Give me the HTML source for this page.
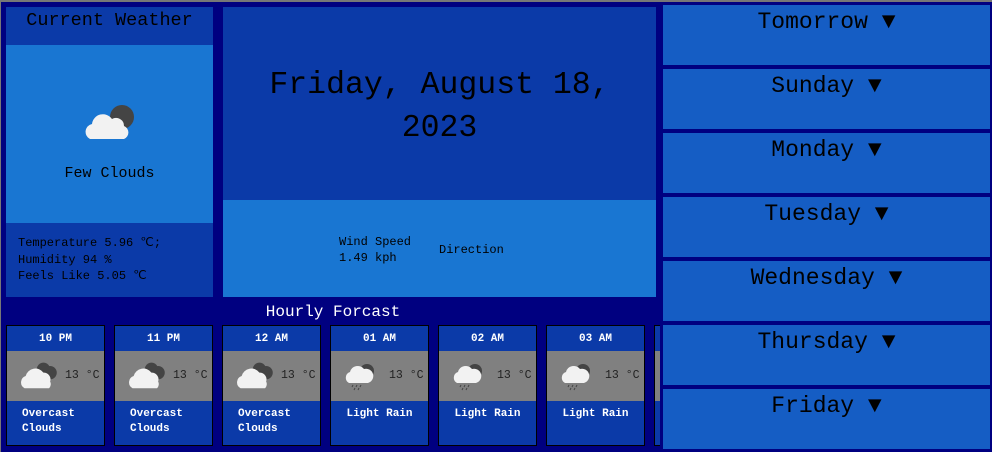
<!DOCTYPE html>
<html><head><style>
*{margin:0;padding:0;box-sizing:border-box}
body{width:992px;height:452px;background:#000080;position:relative;overflow:hidden;font-family:"Liberation Mono",monospace}
.a{position:absolute}
.day{position:absolute;left:663px;width:327px;height:60px;background:#155dc4;text-align:center;font-size:23px;line-height:34px;color:#000}
.card{position:absolute;top:325px;width:99px;height:121px;border:1px solid #000;background:#0b3aa8;overflow:hidden}
.card .h{height:25px;text-align:center;color:#fff;font-weight:bold;font-size:11px;line-height:27px}
.card .m{height:50px;background:#808080;position:relative}
.card .m span{position:absolute;left:58px;top:18px;font-size:11.5px;color:#222}
.card .m svg{position:absolute;left:12px;top:10px}
.card .d{color:#fff;font-weight:bold;font-size:11px;line-height:15px;padding:6px 0 0 15px}
.card .d.c{text-align:center;padding-left:0}
</style></head><body>
<div class="a" style="left:0;top:0;width:992px;height:2px;background:#777"></div>
<div class="a" style="left:0;top:0;width:1px;height:452px;background:#777"></div>
<div class="a" style="left:6px;top:7px;width:207px;height:38px;background:#0b3aa8;text-align:center;font-size:18.5px;line-height:28px">Current Weather</div>
<div class="a" style="left:6px;top:45px;width:207px;height:178px;background:#1976d2;text-align:center">
<svg class="a" style="left:76px;top:56px" width="54" height="40" viewBox="0 0 54 40"><circle cx="40" cy="16" r="12" fill="#444"/><path d="M8 38 a8 8 0 0 1 2-15 a11 11 0 0 1 20-5 a8 8 0 0 1 12 7 a7 7 0 0 1 0 13z" fill="#f2f2f2"/></svg>
<div class="a" style="left:0;width:207px;top:120px;font-size:15px">Few Clouds</div></div>
<div class="a" style="left:6px;top:223px;width:207px;height:74px;background:#0b3aa8;font-size:12px;line-height:16.5px;padding:12px 0 0 12px">Temperature 5.96 ℃;<br>Humidity 94 %<br>Feels Like 5.05 ℃</div>
<div class="a" style="left:223px;top:7px;width:433px;height:193px;background:#0b3aa8;text-align:center;font-size:31.5px;line-height:43px;padding-top:57px">Friday, August 18,<br>2023</div>
<div class="a" style="left:223px;top:200px;width:433px;height:97px;background:#1976d2;font-size:12px;line-height:16px">
<div class="a" style="left:116px;top:34px">Wind Speed<br>1.49 kph</div><div class="a" style="left:216px;top:42px">Direction</div></div>
<div class="a" style="left:6px;width:654px;top:303px;text-align:center;color:#fff;font-size:16px">Hourly Forcast</div>
<div class="a" style="left:0;top:0;width:660px;height:452px;overflow:hidden">
<div class="card" style="left:6px"><div class="h">10 PM</div><div class="m"><svg width="40" height="30" viewBox="0 0 36 26"><circle cx="22" cy="7" r="6" fill="#444"/><circle cx="28" cy="10" r="6" fill="#444"/><path d="M5 24 a6 6 0 0 1 1-11 a9 9 0 0 1 16-3 a6 6 0 0 1 6 8 a5 5 0 0 1-1 6z" fill="#f2f2f2"/></svg><span>13 °C</span></div><div class="d">Overcast<br>Clouds</div></div>
<div class="card" style="left:114px"><div class="h">11 PM</div><div class="m"><svg width="40" height="30" viewBox="0 0 36 26"><circle cx="22" cy="7" r="6" fill="#444"/><circle cx="28" cy="10" r="6" fill="#444"/><path d="M5 24 a6 6 0 0 1 1-11 a9 9 0 0 1 16-3 a6 6 0 0 1 6 8 a5 5 0 0 1-1 6z" fill="#f2f2f2"/></svg><span>13 °C</span></div><div class="d">Overcast<br>Clouds</div></div>
<div class="card" style="left:222px"><div class="h">12 AM</div><div class="m"><svg width="40" height="30" viewBox="0 0 36 26"><circle cx="22" cy="7" r="6" fill="#444"/><circle cx="28" cy="10" r="6" fill="#444"/><path d="M5 24 a6 6 0 0 1 1-11 a9 9 0 0 1 16-3 a6 6 0 0 1 6 8 a5 5 0 0 1-1 6z" fill="#f2f2f2"/></svg><span>13 °C</span></div><div class="d">Overcast<br>Clouds</div></div>
<div class="card" style="left:330px"><div class="h">01 AM</div><div class="m"><svg width="36" height="30" viewBox="0 0 36 28"><circle cx="24" cy="9" r="7" fill="#444"/><path d="M6 21 a6 6 0 0 1 1-11 a8 8 0 0 1 14-3 a6 6 0 0 1 4 14z" fill="#f2f2f2"/><path d="M10 23l-1 2M14 23l-1 2M18 23l-1 2M12 26l-1 2M16 26l-1 2" stroke="#444" stroke-width="1"/></svg><span>13 °C</span></div><div class="d c">Light Rain</div></div>
<div class="card" style="left:438px"><div class="h">02 AM</div><div class="m"><svg width="36" height="30" viewBox="0 0 36 28"><circle cx="24" cy="9" r="7" fill="#444"/><path d="M6 21 a6 6 0 0 1 1-11 a8 8 0 0 1 14-3 a6 6 0 0 1 4 14z" fill="#f2f2f2"/><path d="M10 23l-1 2M14 23l-1 2M18 23l-1 2M12 26l-1 2M16 26l-1 2" stroke="#444" stroke-width="1"/></svg><span>13 °C</span></div><div class="d c">Light Rain</div></div>
<div class="card" style="left:546px"><div class="h">03 AM</div><div class="m"><svg width="36" height="30" viewBox="0 0 36 28"><circle cx="24" cy="9" r="7" fill="#444"/><path d="M6 21 a6 6 0 0 1 1-11 a8 8 0 0 1 14-3 a6 6 0 0 1 4 14z" fill="#f2f2f2"/><path d="M10 23l-1 2M14 23l-1 2M18 23l-1 2M12 26l-1 2M16 26l-1 2" stroke="#444" stroke-width="1"/></svg><span>13 °C</span></div><div class="d c">Light Rain</div></div>
<div class="card" style="left:654px"><div class="h"></div><div class="m"></div></div>
</div>
<div class="day" style="top:5px">Tomorrow ▼</div>
<div class="day" style="top:69px">Sunday ▼</div>
<div class="day" style="top:133px">Monday ▼</div>
<div class="day" style="top:197px">Tuesday ▼</div>
<div class="day" style="top:261px">Wednesday ▼</div>
<div class="day" style="top:325px">Thursday ▼</div>
<div class="day" style="top:389px">Friday ▼</div>
</body></html>
